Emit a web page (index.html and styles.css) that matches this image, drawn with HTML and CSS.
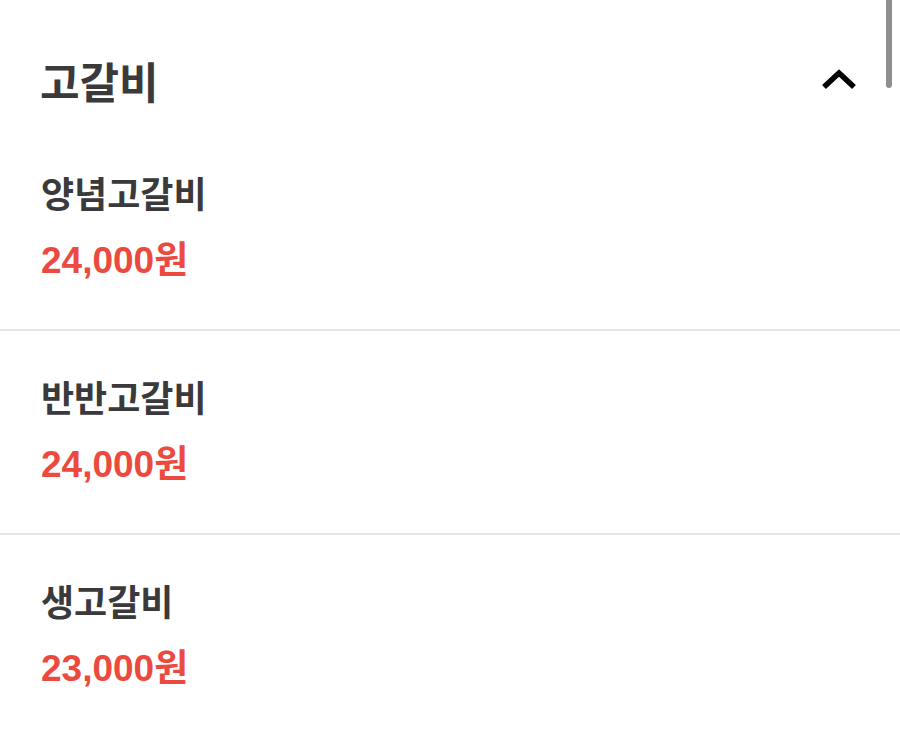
FILE: index.html
```html
<!DOCTYPE html>
<html lang="ko">
<head>
  <meta charset="UTF-8" />
  <meta name="viewport" content="width=device-width, initial-scale=1.0" />
  <title>고갈비 메뉴</title>
  <link rel="stylesheet" href="styles.css">
</head>
<body>

  <div class="scrollbar"></div>

  <div class="menu-group">
    <div class="group-header">
      <h2 class="group-title">고갈비</h2>
      <button class="toggle" aria-label="접기">
        <svg width="36" height="22" viewBox="0 0 36 22">
          <polyline points="3,18 18,4 33,18" fill="none" stroke="#000" stroke-width="5.5" />
        </svg>
      </button>
    </div>

    <div class="menu-item">
      <div class="item-name">양념고갈비</div>
      <div class="item-price">24,000원</div>
    </div>

    <div class="menu-item">
      <div class="item-name">반반고갈비</div>
      <div class="item-price">24,000원</div>
    </div>

    <div class="menu-item">
      <div class="item-name">생고갈비</div>
      <div class="item-price">23,000원</div>
    </div>
  </div>

</body>
</html>
```

FILE: styles.css
```css
:root {
  --text: #3a3a3c;
  --price: #ec4a3f;
  --line: #e6e6ea;
}

body {
  margin: 0;
  background: #fff;
  font-family: 'Noto Sans CJK KR', sans-serif;
  color: var(--text);
  overflow: hidden;
}

.scrollbar {
  position: absolute;
  top: -6px;
  right: 8px;
  width: 6px;
  height: 94px;
  border-radius: 3px;
  background: #8e8e8e;
}

.group-header {
  display: flex;
  align-items: center;
  justify-content: space-between;
  padding: 55px 43px 22px 40px;
}

.group-title {
  margin: 0;
  font-size: 43px;
  line-height: 50px;
  font-weight: 700;
}

.toggle {
  border: none;
  background: none;
  padding: 0;
  display: flex;
  cursor: pointer;
}

.menu-item {
  padding: 43px 40px 48px 41px;
  border-bottom: 2px solid var(--line);
}

.menu-item:last-child {
  border-bottom: none;
}

.item-name {
  font-size: 36px;
  line-height: 44px;
  font-weight: 600;
}

.item-price {
  margin-top: 27px;
  font-family: 'Liberation Sans', 'Noto Sans CJK KR', sans-serif;
  font-size: 37px;
  line-height: 40px;
  font-weight: 700;
  color: var(--price);
}
```
